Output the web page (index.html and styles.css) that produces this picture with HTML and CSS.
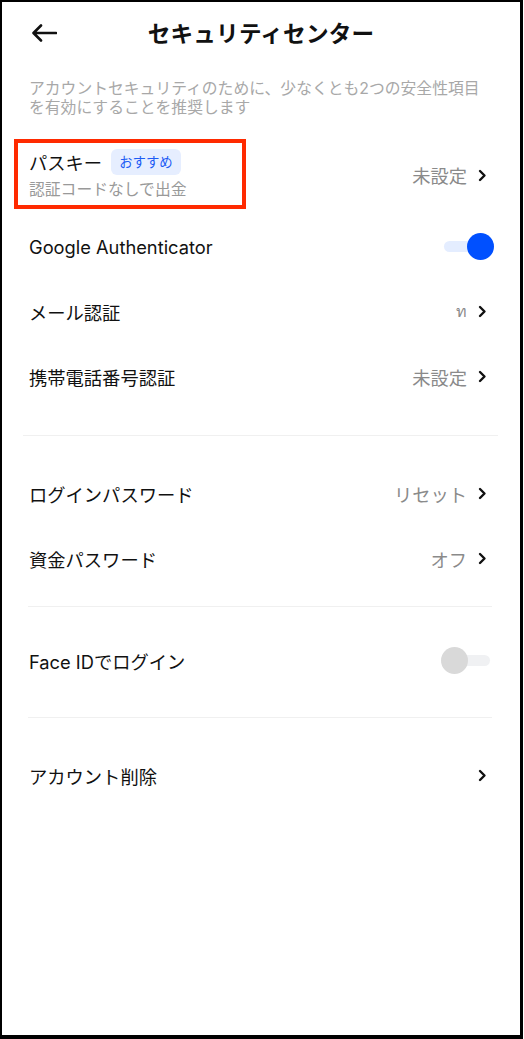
FILE: index.html
```html
<!DOCTYPE html>
<html lang="ja">
<head>
  <meta charset="UTF-8">
  <meta name="viewport" content="width=device-width, initial-scale=1.0">
  <title>セキュリティセンター</title>
  <link rel="stylesheet" href="styles.css">
</head>
<body>
  <div class="pantalla">
    <div class="cabecera">
      <svg class="volver" width="26" height="18" viewBox="0 0 26 18">
        <path d="M25 9H3M10 1.5L2.5 9L10 16.5" fill="none" stroke="#111" stroke-width="2.6" stroke-linecap="round" stroke-linejoin="round"/>
      </svg>
      <h1>セキュリティセンター</h1>
    </div>

    <p class="aviso">アカウントセキュリティのために、少なくとも2つの安全性項目<br>を有効にすることを推奨します</p>

    <div class="grupo primero">
      <div class="fila alta">
        <div class="izq">
          <div class="titulo">パスキー<span class="chip">おすすめ</span></div>
          <div class="sub">認証コードなしで出金</div>
        </div>
        <div class="der"><span class="valor">未設定</span><svg class="flecha" width="9" height="13" viewBox="0 0 9 13"><path d="M2 2L6.5 6.5L2 11" fill="none" stroke="#111" stroke-width="2.4" stroke-linecap="round" stroke-linejoin="round"/></svg></div>
        <div class="marca"></div>
      </div>
      <div class="fila">
        <div class="izq">Google Authenticator</div>
        <div class="interruptor on"></div>
      </div>
      <div class="fila">
        <div class="izq">メール認証</div>
        <div class="der"><span class="valor fina">ท</span><svg class="flecha" width="9" height="13" viewBox="0 0 9 13"><path d="M2 2L6.5 6.5L2 11" fill="none" stroke="#111" stroke-width="2.4" stroke-linecap="round" stroke-linejoin="round"/></svg></div>
      </div>
      <div class="fila">
        <div class="izq">携帯電話番号認証</div>
        <div class="der"><span class="valor">未設定</span><svg class="flecha" width="9" height="13" viewBox="0 0 9 13"><path d="M2 2L6.5 6.5L2 11" fill="none" stroke="#111" stroke-width="2.4" stroke-linecap="round" stroke-linejoin="round"/></svg></div>
      </div>
    </div>

    <div class="linea ancha"></div>

    <div class="grupo segundo">
      <div class="fila">
        <div class="izq">ログインパスワード</div>
        <div class="der"><span class="valor">リセット</span><svg class="flecha" width="9" height="13" viewBox="0 0 9 13"><path d="M2 2L6.5 6.5L2 11" fill="none" stroke="#111" stroke-width="2.4" stroke-linecap="round" stroke-linejoin="round"/></svg></div>
      </div>
      <div class="fila">
        <div class="izq">資金パスワード</div>
        <div class="der"><span class="valor">オフ</span><svg class="flecha" width="9" height="13" viewBox="0 0 9 13"><path d="M2 2L6.5 6.5L2 11" fill="none" stroke="#111" stroke-width="2.4" stroke-linecap="round" stroke-linejoin="round"/></svg></div>
      </div>
    </div>

    <div class="linea l2"></div>

    <div class="grupo tercero">
      <div class="fila">
        <div class="izq">Face IDでログイン</div>
        <div class="interruptor"></div>
      </div>
    </div>

    <div class="linea l3"></div>

    <div class="grupo cuarto">
      <div class="fila">
        <div class="izq">アカウント削除</div>
        <div class="der"><svg class="flecha" width="9" height="13" viewBox="0 0 9 13"><path d="M2 2L6.5 6.5L2 11" fill="none" stroke="#111" stroke-width="2.4" stroke-linecap="round" stroke-linejoin="round"/></svg></div>
      </div>
    </div>
  </div>
</body>
</html>
```

FILE: styles.css
```css
body{
  margin: 0;
  background-color: white;
  font-family: Inter, "Noto Sans CJK JP", "Noto Sans", sans-serif;
  color: #111;
}
.pantalla{
  box-sizing: border-box;
  width: 523px;
  height: 1039px;
  border: solid black;
  border-width: 2px 3px 4px 2px;
  background: white;
}
.cabecera{
  height: 62px;
  display: flex;
  align-items: center;
  justify-content: center;
  position: relative;
}
.cabecera h1{
  margin: 0 0 2px 0;
  font-size: 22.6px;
  font-weight: 700;
  letter-spacing: 0.2px;
}
.volver{
  position: absolute;
  left: 29px;
  top: 22px;
}
.aviso{
  margin: 15px 26px 0 27px;
  font-size: 15.8px;
  line-height: 19px;
  color: #a8a8a8;
}
.grupo.primero{ margin-top: 18px; }
.grupo.segundo{ margin-top: 26px; }
.grupo.tercero{ margin-top: 22px; }
.grupo.cuarto{ margin-top: 26px; }

.fila{
  box-sizing: border-box;
  height: 65px;
  display: flex;
  align-items: center;
  justify-content: space-between;
  padding: 0 33px 2px 27px;
  font-size: 18.3px;
  position: relative;
}
.fila.alta{
  height: 80px;
  padding-bottom: 0;
}
.titulo{
  display: flex;
  align-items: center;
  gap: 9px;
  height: 26px;
}
.chip{
  display: inline-block;
  height: 26px;
  line-height: 26px;
  padding: 0 8px;
  border-radius: 6px;
  background: #e6eeff;
  color: #1d5cf5;
  font-size: 13.4px;
}
.sub{
  margin-top: 4px;
  font-size: 15.8px;
  line-height: 22px;
  color: #999;
}
.der{
  display: flex;
  align-items: center;
  gap: 11px;
}
.valor{
  color: #8a8a8a;
}
.valor.fina{
  font-size: 16px;
}
.flecha{
  display: block;
}
.marca{
  position: absolute;
  left: 12px;
  top: 4px;
  width: 232px;
  height: 70px;
  box-sizing: border-box;
  border: 4px solid #ff2a00;
}

.interruptor{
  position: relative;
  width: 53px;
  height: 27px;
  margin-right: -7px;
}
.interruptor::before{
  content: "";
  position: absolute;
  left: 3px;
  right: 4px;
  top: 8px;
  height: 11px;
  border-radius: 6px;
  background: #f0f1f3;
}
.interruptor::after{
  content: "";
  position: absolute;
  left: 0;
  top: 0;
  width: 27px;
  height: 27px;
  border-radius: 50%;
  background: #d9d9d9;
}
.interruptor.on::before{
  background: #e4edff;
}
.interruptor.on::after{
  left: auto;
  right: 0;
  background: #0050ff;
}

.linea{
  height: 1px;
  background: #f0f0f0;
}
.linea.ancha{
  margin: 25px 22px 0 21px;
}
.linea.l2{
  margin: 14px 28px 0 26px;
}
.linea.l3{
  margin: 23px 28px 0 26px;
}
```
